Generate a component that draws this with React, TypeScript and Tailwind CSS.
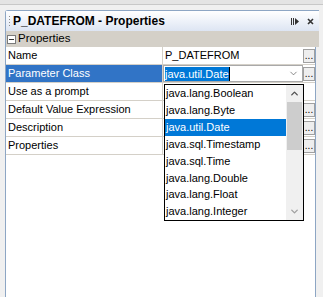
import { ChevronDown, ChevronUp } from "lucide-react";

const rows = [
  { label: "Name", value: "P_DATEFROM", button: true },
  { label: "Parameter Class", value: "java.util.Date", button: true, selected: true },
  { label: "Use as a prompt", value: "", button: false },
  { label: "Default Value Expression", value: "", button: true },
  { label: "Description", value: "", button: true },
  { label: "Properties", value: "", button: true },
];

const classes = [
  "java.lang.Boolean",
  "java.lang.Byte",
  "java.util.Date",
  "java.sql.Timestamp",
  "java.sql.Time",
  "java.lang.Double",
  "java.lang.Float",
  "java.lang.Integer",
];

const DotsButton = () => (
  <div className="w-[12px] h-[14px] border border-[#a0a0a0] bg-[#eeeeee] flex items-end justify-center text-[10px] leading-[10px] text-black pb-[1px]">
    ...
  </div>
);

export default function App() {
  return (
    <div
      className="w-[323px] h-[297px] bg-[#f0f0f0] flex flex-col overflow-hidden text-[11px] text-black"
      style={{ fontFamily: '"Liberation Sans", Arial, sans-serif' }}
    >
      {/* top strip */}
      <div className="h-[4px] bg-[#e4e4e4]" />
      <div className="h-[1px] bg-[#c8c8c8]" />
      <div className="h-[5px]" />

      <div className="flex flex-1 pl-[5px] pr-[4px]">
        <div className="flex-1 flex flex-col border-l border-t border-[#8da6c4] rounded-tl-[3px] relative">
          {/* title bar */}
          <div className="h-[20px] flex items-center bg-gradient-to-b from-[#ffffff] to-[#dde5f3] pl-[3px] pr-[5px]">
            <div className="flex flex-col gap-[2px] mr-[3px]">
              <div className="w-[1px] h-[1px] bg-[#8a8a8a]" />
              <div className="w-[1px] h-[1px] bg-[#8a8a8a]" />
              <div className="w-[1px] h-[1px] bg-[#8a8a8a]" />
              <div className="w-[1px] h-[1px] bg-[#8a8a8a]" />
            </div>
            <span className="font-bold text-[12px]">P_DATEFROM - Properties</span>
            <div className="flex-1" />
            <svg width="9" height="9" viewBox="0 0 9 9" className="mr-[7px]">
              <rect x="0" y="1" width="1" height="7" fill="#333" />
              <rect x="2" y="1" width="1" height="7" fill="#333" />
              <path d="M4 1 L8 4.5 L4 8 Z" fill="#333" />
            </svg>
            <svg width="7" height="7" viewBox="0 0 7 7">
              <path d="M1 1 L6 6 M6 1 L1 6" stroke="#333" strokeWidth="1.6" />
            </svg>
          </div>

          {/* section header */}
          <div className="h-[16px] bg-[#d4d0c8] flex items-center pl-[1px] text-[11.5px]">
            <div className="w-[9px] h-[9px] border border-[#7a7a7a] bg-white flex items-center justify-center mr-[2px]">
              <div className="w-[5px] h-[1px] bg-[#333]" />
            </div>
            <span>Properties</span>
          </div>

          <div className="flex-1 flex">
            <div className="flex-1 bg-white border-r border-[#8da6c4] flex flex-col">
              {/* rows */}
              {rows.map((r) => (
                <div key={r.label} className="h-[18px] flex border-b border-[#d4d0c8]">
                  <div
                    className={`w-[157px] shrink-0 pl-[2px] flex items-center border-r border-[#d4d0c8] ${
                      r.selected ? "bg-[#3174c6] text-white" : ""
                    }`}
                  >
                    {r.label}
                  </div>
                  <div className="flex-1 flex items-center">
                    {r.selected ? (
                      <div className="w-[140px] h-[17px] border border-[#a9a9a9] flex items-center pl-[1px] pr-[3px]">
                        <span className="bg-[#0078d7] text-white leading-[14px]">java.util.Date</span>
                        <div className="w-[1px] h-[14px] bg-black" />
                        <div className="flex-1" />
                        <ChevronDown size={11} strokeWidth={1.5} className="text-[#555]" />
                      </div>
                    ) : (
                      <div className="w-[140px] pl-[2px]">{r.value}</div>
                    )}
                    {r.button && <DotsButton />}
                  </div>
                </div>
              ))}
            </div>
            <div className="w-[3px]" />
          </div>

          {/* dropdown list */}
          <div className="absolute left-[158px] top-[73px] w-[140px] h-[137px] border border-black bg-white flex">
            <div className="flex-1 flex flex-col">
              {classes.map((c) => (
                <div
                  key={c}
                  className={`h-[17px] flex items-center pl-[1px] ${
                    c === "java.util.Date" ? "bg-[#0078d7] text-white" : ""
                  }`}
                >
                  {c}
                </div>
              ))}
            </div>
            <div className="w-[17px] bg-[#f0f0f0] flex flex-col">
              <div className="h-[17px] flex items-center justify-center">
                <ChevronUp size={11} strokeWidth={3} className="text-[#505050]" />
              </div>
              <div className="h-[48px] mx-[1px] bg-[#cdcdcd]" />
              <div className="flex-1" />
              <div className="h-[17px] flex items-center justify-center">
                <ChevronDown size={11} strokeWidth={3} className="text-[#a0a0a0]" />
              </div>
            </div>
          </div>
        </div>
      </div>
    </div>
  );
}
